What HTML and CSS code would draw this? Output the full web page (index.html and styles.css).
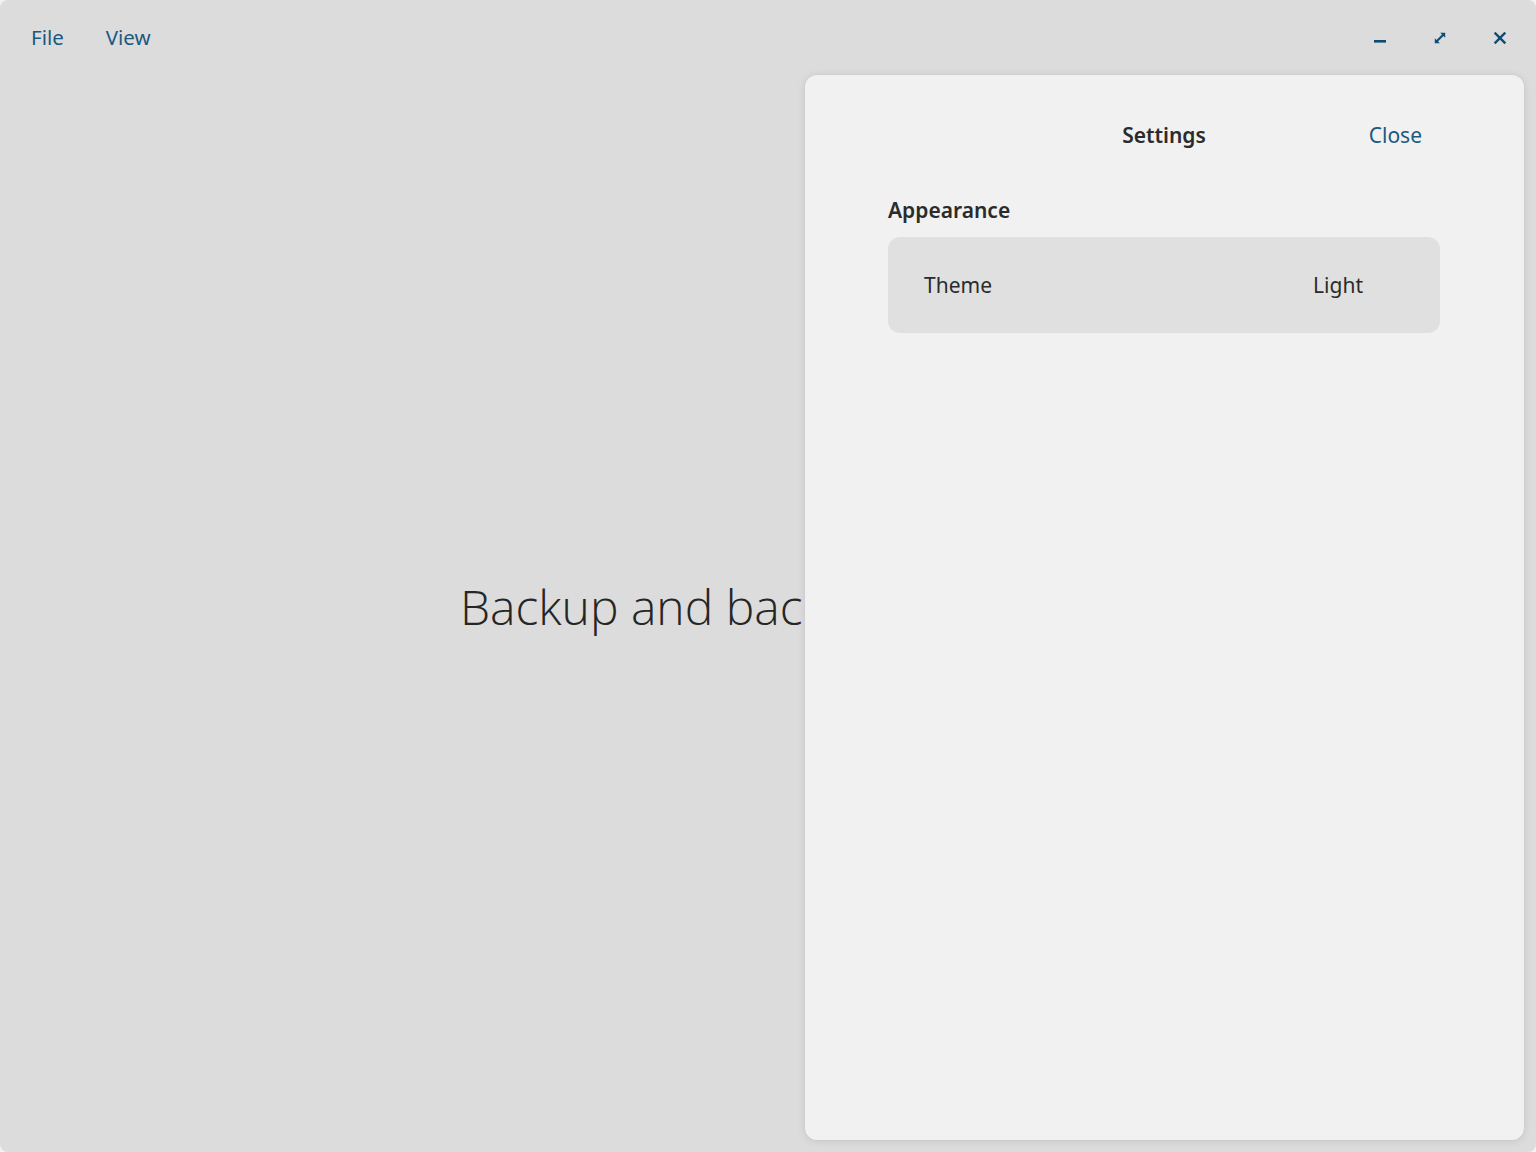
FILE: index.html
```html
<!DOCTYPE html>
<html lang="en">
<head>
<meta charset="utf-8">
<title>Backup</title>
<link rel="stylesheet" href="styles.css">
</head>
<body>
<div class="window">
  <header class="titlebar">
    <nav class="menu">
      <span class="menu-item">File</span>
      <span class="menu-item">View</span>
    </nav>
    <div class="controls">
      <span class="ctl">
        <svg width="14" height="14" viewBox="0 0 14 14"><rect x="1" y="9" width="12" height="2.6" fill="#0f4c71"/></svg>
      </span>
      <span class="ctl">
        <svg width="14" height="14" viewBox="0 0 14 14"><g fill="none" stroke="#0f4c71" stroke-width="2.2"><path d="M3 11 L11 3"/></g><path d="M7.2 1.8 H12.2 V6.8 Z" fill="#0f4c71"/><path d="M1.8 7.2 V12.2 H6.8 Z" fill="#0f4c71"/></svg>
      </span>
      <span class="ctl">
        <svg width="14" height="14" viewBox="0 0 14 14"><g stroke="#0f4c71" stroke-width="2.4" stroke-linecap="square"><path d="M2.5 2.5 L11.5 11.5"/><path d="M11.5 2.5 L2.5 11.5"/></g></svg>
      </span>
    </div>
  </header>
  <main class="content">
    <h1 class="hero">Backup and backup</h1>
  </main>
  <aside class="panel">
    <div class="panel-head">
      <span></span>
      <span class="panel-title">Settings</span>
      <span class="panel-close">Close</span>
    </div>
    <h2 class="section-title">Appearance</h2>
    <div class="card">
      <span class="row-label">Theme</span>
      <span class="row-value">Light</span>
    </div>
  </aside>
</div>
</body>
</html>
```

FILE: styles.css
```css
html, body {
  margin: 0;
  padding: 0;
  background: #f2f2f2;
}
body {
  font-family: "Noto Sans", "Open Sans", sans-serif;
  color: #2b2b2b;
}
.window {
  position: relative;
  width: 1536px;
  height: 1152px;
  background: #dcdcdc;
  border-radius: 8px;
  overflow: hidden;
  display: flex;
  flex-direction: column;
}
.titlebar {
  height: 75px;
  display: flex;
  align-items: center;
  justify-content: space-between;
  padding: 0 29px 0 31px;
  box-sizing: border-box;
}
.menu {
  display: flex;
  gap: 42px;
  margin-top: -1px;
}
.menu-item {
  font-size: 20.5px;
  line-height: 28px;
  color: #1b5a80;
}
.controls {
  display: flex;
  gap: 46px;
  align-items: center;
}
.ctl {
  width: 14px;
  height: 14px;
  display: flex;
}
.content {
  flex: 1;
  display: flex;
  align-items: center;
  padding-left: 460px;
  padding-bottom: 14px;
}
.hero {
  margin: 0;
  font-family: "Open Sans", "Noto Sans", sans-serif;
  font-weight: 300;
  font-size: 48px;
  line-height: 60px;
  color: #262626;
  white-space: nowrap;
}
.panel {
  position: absolute;
  top: 75px;
  right: 12px;
  bottom: 12px;
  width: 719px;
  box-sizing: border-box;
  background: #f1f1f1;
  border-radius: 12px;
  box-shadow: 0 1px 8px rgba(0, 0, 0, 0.10), 0 0 2px rgba(0, 0, 0, 0.06);
  padding: 46px 84px 0 83px;
}
.panel-head {
  display: grid;
  grid-template-columns: 1fr auto 1fr;
  align-items: center;
  line-height: 28px;
  font-size: 21px;
}
.panel-title {
  font-weight: 600;
  color: #2b2b2b;
}
.panel-close {
  justify-self: end;
  color: #1b5a80;
  margin-right: 18px;
}
.section-title {
  margin: 47px 0 13px;
  font-size: 21px;
  line-height: 28px;
  font-weight: 600;
  color: #2b2b2b;
}
.card {
  height: 96px;
  box-sizing: border-box;
  background: #e0e0e0;
  border-radius: 12px;
  display: flex;
  align-items: center;
  justify-content: space-between;
  padding: 0 77px 0 36px;
  font-size: 21px;
  line-height: 28px;
  color: #2b2b2b;
}
```
